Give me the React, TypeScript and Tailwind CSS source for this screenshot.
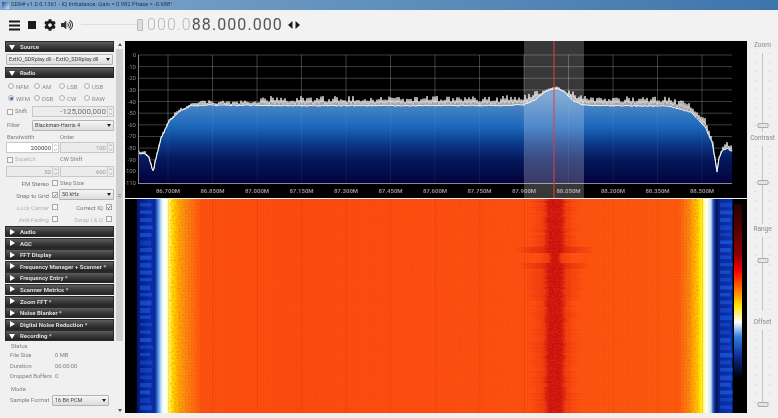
import { FaCog, FaVolumeUp } from "react-icons/fa";

// seeded random so that every render gives the same trace
function makeRandom(seed: number) {
  let s = seed;
  return () => {
    s = (s * 16807) % 2147483647;
    return s / 2147483647;
  };
}

const lerpPoints = (pts: number[][], x: number) => {
  for (let i = 0; i < pts.length - 1; i++) {
    if (x <= pts[i + 1][0]) {
      const t = (x - pts[i][0]) / (pts[i + 1][0] - pts[i][0]);
      return pts[i][1] + (pts[i + 1][1] - pts[i][1]) * t;
    }
  }
  return pts[pts.length - 1][1];
};

// lower edge of the white trace, x / y in page pixels
const traceFloor = [
  [140, 153], [146, 153], [150, 157], [153, 168], [154.5, 171], [156, 162], [162, 138], [170, 121],
  [180, 111], [193, 105], [215, 104.5], [300, 105], [400, 105], [500, 105], [525, 104], [535, 100],
  [545, 92], [552, 89], [558, 88], [565, 91], [573, 99], [582, 104], [600, 105], [670, 105.5], [693, 112],
  [707, 128], [713, 142], [716, 158], [718, 171], [720, 158], [724, 149], [729, 148], [733, 151],
];

function buildSpectrum() {
  const rnd = makeRandom(4711);
  const points: string[] = [];
  const lace: string[] = [];
  for (let x = 140; x <= 733; x += 1) {
    const floor = lerpPoints(traceFloor, x) + rnd() * 1.2;
    const flat = x > 190 && x < 715;
    let height = flat ? (x < 262 ? 2 + rnd() * 2.5 : 4 + rnd() * 5.5) : 1 + rnd() * 2;
    if (x > 538 && x < 570) height = 1 + rnd() * 1.5;
    if (x > 722) height = 2 + rnd() * 4;
    lace.push(`${x} ${(x % 2 === 0 ? floor - height : floor).toFixed(1)}`);
    points.push(`${x} ${floor.toFixed(1)}`);
  }
  return { lace: "M" + lace.join("L"), line: "M" + points.join("L"), fill: `M140 183L${points.join("L")}L733 183Z` };
}

function buildWaterfall() {
  const rnd = makeRandom(991);
  const core: { y: number; half: number; o: number }[] = [];
  const halo: { y: number; half: number; o: number }[] = [];
  for (let y = 199; y < 412; y += 2) {
    let coreHalf = 10 + rnd() * 3;
    let haloHalf = 20 + rnd() * 8;
    let haloO = 0.45 + rnd() * 0.2;
    if (y >= 246 && y < 253) {
      haloHalf = 40;
      haloO = 0.85;
    }
    if (y >= 262 && y < 269) {
      haloHalf = 36;
      haloO = 0.8;
    }
    if (y >= 253 && y < 262) {
      coreHalf = 6;
      haloHalf = 16;
    }
    if (y > 269 && y < 300) haloHalf = 26 + rnd() * 6;
    core.push({ y, half: coreHalf, o: 0.8 + rnd() * 0.12 });
    halo.push({ y, half: haloHalf, o: haloO });
  }
  const blobs: { x: number; y: number; w: number; h: number; o: number }[] = [];
  for (let y = 203; y < 410; y += 7.5) {
    [141, 721].forEach((x0) => {
      blobs.push({ x: x0, y, w: 10 + rnd() * 3, h: 3 + rnd() * 2, o: 0.35 + rnd() * 0.35 });
    });
  }
  return { core, halo, blobs };
}

const spectrum = buildSpectrum();
const waterfall = buildWaterfall();

const dbLabels = ["0", "-10", "-20", "-30", "-40", "-50", "-60", "-70", "-80", "-90", "-100", "-110"];
const freqLabels = [
  "86.700M", "86.850M", "87.000M", "87.150M", "87.300M", "87.450M", "87.600M",
  "87.750M", "87.900M", "88.050M", "88.200M", "88.350M", "88.500M",
];
const gridX = freqLabels.map((_, i) => 169 + i * 44.5);

function Spectrum() {
  return (
    <svg viewBox="126 41 622 157" className="block h-[157px] w-[622px] bg-black">
      <defs>
        <linearGradient id="specFill" gradientUnits="userSpaceOnUse" x1="0" y1="95" x2="0" y2="183">
          <stop offset="0" stopColor="#5f93c9" />
          <stop offset="0.2" stopColor="#3a7ac0" />
          <stop offset="0.36" stopColor="#1c68bc" />
          <stop offset="0.55" stopColor="#0c3a8a" />
          <stop offset="0.72" stopColor="#051a5e" />
          <stop offset="1" stopColor="#03023c" />
        </linearGradient>
      </defs>
      {dbLabels.map((d, i) => {
        const y = 55 + i * 11.64;
        return (
          <g key={d}>
            <line x1="139" x2="733" y1={y} y2={y} stroke="#fff" strokeOpacity="0.24" strokeWidth="1" />
            <text x="137" y={y + 2} textAnchor="end" fontSize="6" fontFamily="Roboto, sans-serif" fill="#8a8a8a">
              {d}
            </text>
          </g>
        );
      })}
      {gridX.map((x, i) => (
        <g key={x}>
          <line x1={x} x2={x} y1="55" y2="183" stroke="#fff" strokeOpacity="0.24" strokeWidth="1" />
          <text x={x} y="193" textAnchor="middle" fontSize="6" fontWeight="700" fontFamily="Roboto, sans-serif" fill="#8f8f8f">
            {freqLabels[i]}
          </text>
        </g>
      ))}
      <path d={spectrum.fill} fill="url(#specFill)" />
      {gridX.map((x) => (
        <line key={x} x1={x} x2={x} y1="105" y2="183" stroke="#fff" strokeOpacity="0.06" />
      ))}
      <line x1="139.5" x2="139.5" y1="55" y2="183" stroke="#8a8a8a" />
      <line x1="139" x2="733" y1="183.5" y2="183.5" stroke="#8a8a8a" />
      <path d={spectrum.lace} stroke="#ffffff" strokeWidth="0.8" fill="none" />
      <path d={spectrum.line} stroke="#f6f6f6" strokeWidth="1" fill="none" />
      <rect x="525" y="41" width="60" height="157" fill="#fff" fillOpacity="0.22" />
      <line x1="555" x2="555" y1="41" y2="198" stroke="#e0403c" strokeWidth="1" />
    </svg>
  );
}

function Waterfall() {
  return (
    <svg viewBox="126 199 622 214" className="block h-[214px] w-[622px] bg-black">
      <defs>
        <linearGradient id="wfBase" gradientUnits="userSpaceOnUse" x1="126" y1="0" x2="747" y2="0">
          {[
            [126, "#000000"], [137, "#000000"], [139, "#021a78"], [150, "#0a2ea8"], [156, "#0a2a9a"],
            [160, "#6aa8f0"], [163, "#e8f4ff"], [166, "#ffffff"], [170, "#ffff80"], [173, "#ffe600"],
            [178, "#ffb800"], [187, "#ff8a10"], [203, "#ff5010"], [300, "#ff4a10"], [550, "#ff5012"],
            [680, "#ff5a10"], [690, "#ff8a10"], [697, "#ffc000"], [702, "#ffe800"], [705, "#ffff90"],
            [708, "#ffffff"], [712, "#c8e0f8"], [714, "#3060c0"], [717, "#03145c"], [722, "#0a2a9a"],
            [733, "#0a34b0"], [734, "#000000"], [747, "#000000"],
          ].map(([x, c]) => (
            <stop key={x} offset={((x as number) - 126) / 621} stopColor={c as string} />
          ))}
        </linearGradient>
        <linearGradient id="wfCore">
          <stop offset="0" stopColor="#c80a10" stopOpacity="0" />
          <stop offset="0.25" stopColor="#c80a10" />
          <stop offset="0.75" stopColor="#c80a10" />
          <stop offset="1" stopColor="#c80a10" stopOpacity="0" />
        </linearGradient>
        <linearGradient id="wfHalo">
          <stop offset="0" stopColor="#e01a10" stopOpacity="0" />
          <stop offset="0.4" stopColor="#e01a10" />
          <stop offset="0.6" stopColor="#e01a10" />
          <stop offset="1" stopColor="#e01a10" stopOpacity="0" />
        </linearGradient>
        <linearGradient id="wfBar" x1="0" y1="0" x2="0" y2="1">
          <stop offset="0" stopColor="#260000" />
          <stop offset="0.25" stopColor="#900000" />
          <stop offset="0.33" stopColor="#ff0000" />
          <stop offset="0.43" stopColor="#ff8000" />
          <stop offset="0.5" stopColor="#ffe800" />
          <stop offset="0.58" stopColor="#ffffff" />
          <stop offset="0.65" stopColor="#3080e0" />
          <stop offset="0.75" stopColor="#0a2a90" />
          <stop offset="0.85" stopColor="#000000" />
          <stop offset="1" stopColor="#000000" />
        </linearGradient>
        <pattern id="wfCheck" width="3" height="3" patternUnits="userSpaceOnUse">
          <rect width="1" height="3" fill="#c02000" fillOpacity="0.08" />
          <rect width="3" height="1" fill="#c02000" fillOpacity="0.05" />
        </pattern>
        <filter id="wfNoise" x="0" y="0" width="100%" height="100%">
          <feTurbulence type="fractalNoise" baseFrequency="0.45 0.6" numOctaves="2" seed="7" />
          <feColorMatrix values="0 0 0 0 0.8  0 0 0 0 0.1  0 0 0 0 0  0 0 0 0.9 -0.38" />
        </filter>
      </defs>
      <rect x="126" y="199" width="622" height="214" fill="url(#wfBase)" />
      {waterfall.blobs.map((b, i) => (
        <rect key={i} x={b.x} y={b.y} width={b.w} height={b.h} fill="#1f5fe8" fillOpacity={b.o} />
      ))}
      {waterfall.halo.map((r) => (
        <rect key={r.y} x={555 - r.half} y={r.y} width={r.half * 2} height="2" fill="url(#wfHalo)" fillOpacity={r.o} />
      ))}
      {waterfall.core.map((r) => (
        <rect key={r.y} x={556 - r.half} y={r.y} width={r.half * 2} height="2" fill="url(#wfCore)" fillOpacity={r.o} />
      ))}
      <rect x="178" y="199" width="515" height="214" fill="url(#wfCheck)" />
      {gridX.map((x) => (
        <rect key={x} x={x} y="199" width="1" height="214" fill="#b82000" fillOpacity="0.16" />
      ))}
      <rect x="170" y="199" width="530" height="214" filter="url(#wfNoise)" />
      <rect x="735" y="204" width="8" height="204" fill="url(#wfBar)" />
    </svg>
  );
}

function Header({ title, open = false }: { title: string; open?: boolean }) {
  return (
    <div className="flex h-[11px] items-center gap-[5px] whitespace-nowrap bg-gradient-to-b from-[#666666] via-[#3c3c3c] to-[#1e1e1e] pl-[4px] text-[6px] font-bold text-[#dddddd] shadow-[inset_0_0_0_1px_#2a2a2a]">
      <svg width="6" height="6" viewBox="0 0 6 6" className="shrink-0">
        <path d={open ? "M0 1H6L3 6Z" : "M1 0L6 3L1 6Z"} fill="#ffffff" />
      </svg>
      <span>{title}</span>
    </div>
  );
}

function Combo({ text, className }: { text: string; className: string }) {
  return (
    <div className={`flex h-[11px] items-center justify-between whitespace-nowrap rounded-[1px] border border-[#b4b4b4] bg-gradient-to-b from-[#f6f6f6] to-[#dcdcdc] px-[2px] text-[5.5px] text-[#444444] ${className}`}>
      <span>{text}</span>
      <svg width="4" height="3" viewBox="0 0 4 3">
        <path d="M0 0H4L2 3Z" fill="#222222" />
      </svg>
    </div>
  );
}

function Spin({ value, white = false, large = false }: { value: string; white?: boolean; large?: boolean }) {
  return (
    <div className={`flex h-[11px] items-center justify-end border border-[#c8c8c8] ${white ? "bg-white text-[#444444]" : "bg-[#ececec]"} ${large ? "text-[8px] text-[#707070]" : "text-[6px] text-[#9a9a9a]"}`}>
      <span className="pr-[1px]">{value}</span>
      <div className="flex h-full w-[6px] flex-col border-l border-[#cccccc] text-[#888888]">
        <svg width="5" height="9" viewBox="0 0 5 9">
          <path d="M1 3L2.5 1.5L4 3M1 6L2.5 7.5L4 6" stroke="#999999" strokeWidth="0.7" fill="none" />
        </svg>
      </div>
    </div>
  );
}

function Radio({ label, checked = false }: { label: string; checked?: boolean }) {
  return (
    <div className="flex h-[12px] items-center gap-[2px] text-[6px] text-[#8c8c8c]">
      <span className="flex h-[6px] w-[6px] items-center justify-center rounded-full border border-[#b0b0b0] bg-[#f4f4f4]">
        {checked && <span className="h-[3px] w-[3px] rounded-full bg-[#3a6ea5]" />}
      </span>
      <span>{label}</span>
    </div>
  );
}

function Check({ checked = false }: { checked?: boolean }) {
  return (
    <span className="flex h-[6px] w-[6px] shrink-0 items-center justify-center border border-[#a8a8a8] bg-[#f8f8f8]">
      {checked && (
        <svg width="5" height="5" viewBox="0 0 5 5">
          <path d="M0.5 2.5L2 4L4.5 0.5" stroke="#3a4a80" strokeWidth="0.9" fill="none" />
        </svg>
      )}
    </span>
  );
}

function CheckRow({ label, checked, muted, wide }: { label: string; checked?: boolean; muted?: boolean; wide?: boolean }) {
  return (
    <div className={`flex h-[12px] items-center justify-end gap-[3px] whitespace-nowrap text-[6px] ${wide ? "pr-[2px]" : ""} ${muted ? "text-[#b4b4b4]" : "text-[#777777]"}`}>
      <span>{label}</span>
      <Check checked={checked} />
    </div>
  );
}

function Label({ text, className = "" }: { text: string; className?: string }) {
  return <span className={`whitespace-nowrap text-[5.8px] text-[#808080] ${className}`}>{text}</span>;
}

function SidePanel() {
  return (
    <div className="flex w-[114px] shrink-0 flex-col pl-[5px] pt-[1px]">
      <Header title="Source" open />
      <Combo text="ExtIO_SDRplay.dll - ExtIO_SDRplay.dll" className="mx-[1px] mt-[2px]" />
      <div className="mt-[2px]">
        <Header title="Radio" open />
      </div>
      <div className="mt-[1px] grid grid-cols-[26px_25px_25px_1fr] pl-[3px] pt-[1px]">
        <Radio label="NFM" />
        <Radio label="AM" />
        <Radio label="LSB" />
        <Radio label="USB" />
        <Radio label="WFM" checked />
        <Radio label="DSB" />
        <Radio label="CW" />
        <Radio label="RAW" />
      </div>
      <div className="mt-[2px] flex items-center pl-[2px]">
        <Check />
        <Label text="Shift" className="ml-[2px] w-[17px]" />
        <div className="flex-1">
          <Spin value="-125,000,000" large />
        </div>
      </div>
      <div className="mt-[3px] flex items-center pl-[2px]">
        <Label text="Filter" className="w-[25px]" />
        <Combo text="Blackman-Harris 4" className="flex-1" />
      </div>
      <div className="mt-[2px] grid grid-cols-[53px_1fr] gap-x-[1px] pl-[1px]">
        <Label text="Bandwidth" className="h-[9px] pl-[1px]" />
        <Label text="Order" />
        <Spin value="200000" white />
        <Spin value="100" />
        <div className="flex h-[13px] items-center gap-[2px] pl-[1px]">
          <Check />
          <Label text="Squelch" className="text-[#b4b4b4]" />
        </div>
        <Label text="CW Shift" className="pt-[2px]" />
        <Spin value="50" />
        <Spin value="600" />
      </div>
      <div className="mt-[0px] grid grid-cols-[53px_1fr] gap-x-[1px]">
        <CheckRow label="FM Stereo" />
        <div className="flex items-center pl-[1px]">
          <Label text="Step Size" />
        </div>
        <CheckRow label="Snap to Grid" checked />
        <Combo text="50 kHz" className="text-[#333333]" />
        <CheckRow label="Lock Carrier" muted />
        <CheckRow label="Correct IQ" checked wide />
        <CheckRow label="Anti-Fading" muted />
        <CheckRow label="Swap I & Q" muted wide />
      </div>
      <div className="mt-[1px] flex flex-col gap-[0.6px]">
        <Header title="Audio" />
        <Header title="AGC" />
        <Header title="FFT Display" />
        <Header title="Frequency Manager + Scanner *" />
        <Header title="Frequency Entry *" />
        <Header title="Scanner Metrics *" />
        <Header title="Zoom FFT *" />
        <Header title="Noise Blanker *" />
        <Header title="Digital Noise Reduction *" />
        <Header title="Recording *" open />
      </div>
      <div className="mt-[1px] flex flex-col pl-[5px]">
        <Label text="Status" className="pl-[1px] leading-[8px]" />
        <div className="grid grid-cols-[45px_1fr] leading-[10.5px]">
          <Label text="File Size" />
          <Label text="0 MB" />
          <Label text="Duration" />
          <Label text="00:00:00" />
          <Label text="Dropped Buffers" />
          <Label text="0" />
        </div>
        <Label text="Mode" className="mt-[3px] pl-[1px] leading-[8px]" />
        <div className="mt-[2px] flex items-center">
          <Label text="Sample Format" className="w-[42px]" />
          <Combo text="16 Bit PCM" className="w-[57px] text-[#333333]" />
        </div>
      </div>
    </div>
  );
}

function ScrollBar() {
  return (
    <div className="flex w-[11px] shrink-0 flex-col items-center pt-[3px]">
      <svg width="4" height="3" viewBox="0 0 4 3">
        <path d="M0 3H4L2 0Z" fill="#555555" />
      </svg>
      <div className="mt-[3px] flex h-[292px] w-[7px] items-center justify-center bg-[#cfcfcf]">
        <span className="h-[3px] w-[3px] border-y border-[#999999]" />
      </div>
      <div className="flex-1" />
      <svg width="4" height="3" viewBox="0 0 4 3" className="mb-[6px]">
        <path d="M0 0H4L2 3Z" fill="#555555" />
      </svg>
    </div>
  );
}

const dots =
  "w-px bg-[repeating-linear-gradient(to_bottom,#cccccc_0,#cccccc_1px,transparent_1px,transparent_9px)]";

function VSlider({ label, heightClass, thumbClass }: { label: string; heightClass: string; thumbClass: string }) {
  return (
    <div className="flex flex-col items-center">
      <span className="text-[6.5px] leading-[9px] text-[#8a8a8a]">{label}</span>
      <div className={`relative mt-[3px] flex justify-center gap-[6px] ${heightClass}`}>
        <div className={dots} />
        <div className="w-px bg-[#c4c4c4]" />
        <div className={dots} />
        <div className={`absolute left-1/2 h-[5px] w-[11px] -translate-x-1/2 rounded-[1px] border border-[#aaaaaa] bg-[#e4e4e4] ${thumbClass}`} />
      </div>
    </div>
  );
}

export default function App() {
  return (
    <div className="flex h-[418px] w-[778px] flex-col overflow-hidden bg-[#f0f0f0] blur-[0.35px] [font-family:'Roboto','Liberation_Sans',sans-serif]">
      {/* title bar */}
      <div className="flex h-[10px] shrink-0 items-center gap-[2px] bg-gradient-to-r from-[#7fa6cb] via-[#5f8fbc] to-[#3d75ab] pl-[2px] text-[5.8px] leading-none text-[#26384c]">
        <span className="h-[7px] w-[7px] bg-gradient-to-br from-[#1c4f9c] to-[#d8e8f8]" />
        <span>SDR# v1.0.0.1361 - IQ Imbalance: Gain = 0.982 Phase = -0.688°</span>
      </div>

      {/* toolbar */}
      <div className="flex h-[30px] shrink-0 items-center bg-[#f2f2f2] pl-[9px]">
        <svg width="11" height="11" viewBox="0 0 11 11">
          <path d="M0 1.5H11M0 5.5H11M0 9.5H11" stroke="#1a1a1a" strokeWidth="2" />
        </svg>
        <span className="ml-[8px] h-[8px] w-[8px] bg-[#1c1c1c]" />
        <FaCog className="ml-[8px] h-[12px] w-[12px] text-[#1c1c1c]" />
        <FaVolumeUp className="ml-[5px] h-[12px] w-[12px] text-[#333333]" />
        <div className="relative ml-[8px] h-[12px] w-[62px]">
          <div className="absolute left-0 right-0 top-[5px] h-px bg-[#dddddd]" />
          <div className="absolute right-0 top-0 h-[12px] w-[6px] rounded-[1px] border border-[#b8b8b8] bg-[#dedede]" />
        </div>
        <div className="ml-[4px] whitespace-nowrap text-[16px] font-light leading-none tracking-[1.08px] text-[#b8b8b8]">
          000.0<span className="font-normal text-[#555555]">88.000.000</span>
        </div>
        <svg width="12" height="8" viewBox="0 0 12 8" className="ml-[5px]">
          <path d="M4.5 0V8L0 4ZM7.5 0V8L12 4Z" fill="#1c1c1c" />
        </svg>
      </div>

      {/* main area */}
      <div className="flex min-h-0 flex-1">
        <SidePanel />
        <ScrollBar />
        <div className="flex w-[622px] shrink-0 flex-col gap-[1px] pt-[1px]">
          <Spectrum />
          <Waterfall />
        </div>
        <div className="flex flex-1 flex-col pt-[1px]">
          <VSlider label="Zoom" heightClass="h-[79px]" thumbClass="top-[70px]" />
          <div className="mt-[2px]">
            <VSlider label="Contrast" heightClass="h-[78px]" thumbClass="top-[34px]" />
          </div>
          <div className="mt-[1px]">
            <VSlider label="Range" heightClass="h-[74px]" thumbClass="top-[21px]" />
          </div>
          <div className="mt-[7px]">
            <VSlider label="Offset" heightClass="h-[74px]" thumbClass="top-[72px]" />
          </div>
        </div>
      </div>
    </div>
  );
}
